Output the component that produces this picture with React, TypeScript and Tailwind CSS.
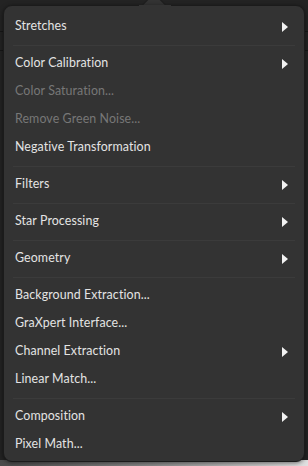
type Item = {
    label: string;
    submenu?: boolean;
    disabled?: boolean;
};

// groups are split by separators
const groups: Item[][] = [
    [{ label: "Stretches", submenu: true }],
    [
        { label: "Color Calibration", submenu: true },
        { label: "Color Saturation...", disabled: true },
        { label: "Remove Green Noise...", disabled: true },
        { label: "Negative Transformation" },
    ],
    [{ label: "Filters", submenu: true }],
    [{ label: "Star Processing", submenu: true }],
    [{ label: "Geometry", submenu: true }],
    [
        { label: "Background Extraction..." },
        { label: "GraXpert Interface..." },
        { label: "Channel Extraction", submenu: true },
        { label: "Linear Match..." },
    ],
    [{ label: "Composition", submenu: true }, { label: "Pixel Math..." }],
];

const Arrow = () => (
    <svg width="6" height="10" viewBox="0 0 6 10" className="shrink-0">
        <polygon points="0,0 6,5 0,10" fill="#f2f2f2" />
    </svg>
);

const MenuRow = ({ item }: { item: Item }) => (
    <div
        className={`h-[28px] flex items-center justify-between pl-[10px] pr-[15px] rounded-md ${
            item.disabled ? "text-[#777777]" : "text-[#e4e4e4]"
        }`}
    >
        <span>{item.label}</span>
        {item.submenu && <Arrow />}
    </div>
);

export default function App() {
    return (
        <div
            className="relative w-[308px] h-[466px] overflow-hidden bg-[#232323] text-[12.4px] tracking-[0.1px]"
            style={{ fontFamily: "Lato, 'Noto Sans', sans-serif" }}
        >
            {/* window behind the popover */}
            <div className="absolute left-0 right-0 top-[31px] h-px bg-[#161616]" />
            <div className="absolute left-0 right-0 top-[50px] h-px bg-[#161616]" />
            <div className="absolute left-0 right-0 bottom-0 h-[6px] bg-gradient-to-r from-[#4a4a4a] via-[#8a8a8a] to-[#e0e0e0]" />

            <div className="relative ml-[3px] mt-[5px] w-[302px] h-[457px]">
                {/* pointer */}
                <div className="absolute left-[143px] -top-[9px] w-[16px] h-[16px] rotate-45 bg-[#333333] border-l border-t border-[#1b1b1b]" />
                <div className="relative h-full bg-[#333333] rounded-[9px] border border-[#1b1b1b] shadow-[0_1px_4px_rgba(0,0,0,0.5)] pt-[6.5px] pb-[3px] px-[1px]">
                    <div className="absolute left-[135px] -top-px w-[32px] h-[2px] bg-[#333333]" />
                    {groups.map((group, gi) => (
                        <div key={gi}>
                            {gi > 0 && (
                                <div className="py-[4px] px-[8px]">
                                    <div className="h-px bg-[#3b3b3b]" />
                                </div>
                            )}
                            {group.map((item) => (
                                <MenuRow key={item.label} item={item} />
                            ))}
                        </div>
                    ))}
                </div>
            </div>
        </div>
    );
}
